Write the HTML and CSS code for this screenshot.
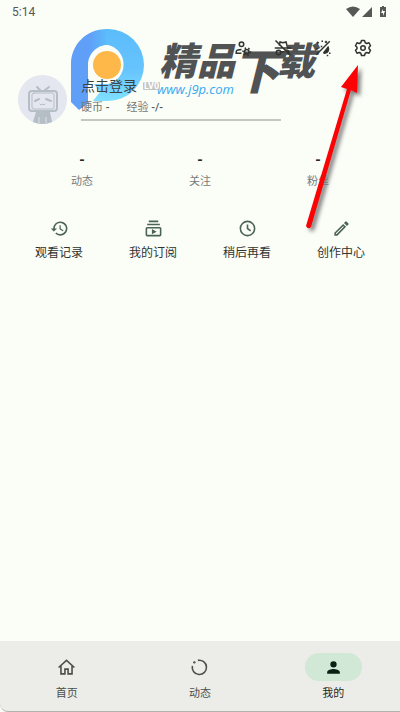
FILE: index.html
```html
<!DOCTYPE html>
<html lang="zh-CN">
<head>
    <meta charset="UTF-8">
    <meta name="viewport" content="width=device-width, initial-scale=1.0">
    <title>我的</title>
    <link rel="stylesheet" href="styles.css">
</head>
<body>
    <div class="watermark">
        <svg class="watermark-logo" viewBox="0 0 74 82">
            <defs>
                <linearGradient id="ring" x1="0" y1="0" x2="0" y2="1">
                    <stop offset="0" stop-color="#5bbcfb"/>
                    <stop offset="0.55" stop-color="#66c3fd"/>
                    <stop offset="1" stop-color="#7fe0ff"/>
                </linearGradient>
                <linearGradient id="stem" x1="0" y1="0" x2="1" y2="0">
                    <stop offset="0" stop-color="#609ff8"/>
                    <stop offset="0.5" stop-color="#609ff8"/>
                    <stop offset="1" stop-color="#5bbcfb"/>
                </linearGradient>
            </defs>
            <path fill="url(#stem)" d="M0 35C0 16 15 0 36 0V16C26 16 17 25 17 36V74L8 81L0 73Z"/>
            <path fill="url(#ring)" d="M35 0H37A36 36 0 0 1 37 72H22L29 63L23 55H37A20 20 0 0 0 37 16H35Z"/>
            <circle cx="36" cy="36" r="14" fill="#fdb849"/>
        </svg>
        <div class="watermark-name">精品<span class="low">下</span>载</div>
        <div class="watermark-site">www.j9p.com</div>
    </div>

    <header class="status-bar">
        <span>5:14</span>
        <svg class="status-icons" viewBox="0 0 42 14">
            <path fill="#555855" d="M0 4Q7-1 14 4L7 12ZM26 2V12H16ZM34 2H36V1H38V2H40V12H34Z"/>
            <path fill="#fbfdf7" d="M37 4L35 8H37V11L39 6H37Z"/>
        </svg>
    </header>

    <div class="toolbar">
        <button type="button" aria-label="账号设置">
            <svg viewBox="0 0 24 24"><g fill="none" stroke="currentColor" stroke-width="2"><circle cx="10" cy="7" r="3"/><path d="M10 19H3V17C3 15 6 14 10 14"/><circle cx="17" cy="17" r="3"/><circle cx="17" cy="17" r="5" stroke-dasharray="2 3"/></g></svg>
        </button>
        <button type="button" aria-label="无痕模式">
            <svg viewBox="0 0 24 24"><g fill="none" stroke="currentColor" stroke-width="2"><path d="M2 2L22 22M1 12H23M7 9L8 4L12 5L16 4L18 11"/><circle cx="6" cy="18" r="3"/><path d="M9 17H14"/><path d="M15 15C20 14 21 18 19 20"/></g></svg>
        </button>
        <button type="button" aria-label="主题">
            <svg viewBox="0 0 24 24"><path fill="none" stroke="currentColor" stroke-width="2" d="M3 21L21 3"/><path fill="currentColor" d="M3 5L5 3L7 5L5 7ZM10 2H12V4H10ZM14 4L16 2L18 4L16 6ZM3 12H5V14H3ZM9 9H11V11H9ZM19 9C22 14 20 20 13 20L12 18Z"/><path fill="currentColor" d="M20 18H22V20H20ZM17 21H19V23H17Z"/></svg>
        </button>
        <button type="button" aria-label="设置">
            <svg viewBox="0 0 24 24"><g fill="none" stroke="currentColor" stroke-width="2" stroke-linejoin="round"><path d="M10 2H14L15 5L17 6L20 5L22 9L20 11V13L22 15L20 19L17 18L15 19L14 22H10L9 19L7 18L4 19L2 15L4 13V11L2 9L4 5L7 6L9 5Z"/><circle cx="12" cy="12" r="3"/></g></svg>
        </button>
    </div>

    <main>
        <section class="profile">
            <svg class="avatar" viewBox="0 0 49 49">
                <circle cx="24.500" cy="24.500" r="24.500" fill="#e4e6f0"/>
                <g fill="none" stroke="#b5bdc5" stroke-width="2" stroke-linecap="round">
                    <path d="M19 12L22 15M31 12L27 15"/>
                    <rect x="11" y="16" width="28" height="20" rx="3"/>
                    <rect x="14" y="18" width="22" height="16" rx="2" stroke-width="1"/>
                    <path d="M17 26L21 24M33 26L28 24"/>
                    <path stroke-width="1" d="M22 29L23 30L25 29L26 30L27 29"/>
                </g>
                <path fill="#b5bdc5" d="M18 37H32L34 47Q25 51 15 47Z"/>
                <path stroke="#dfe2e9" d="M21 42V48M28 42V48"/>
            </svg>
            <div class="profile-info">
                <div class="profile-name"><a href="#login">点击登录</a><span class="level">LV0</span></div>
                <div class="profile-coins"><span>硬币 <b>-</b></span><span>经验 <b>-/-</b></span></div>
                <div class="level-bar"></div>
            </div>
        </section>

        <section class="stats">
            <a href="#dynamics"><b>-</b><span>动态</span></a>
            <a href="#following"><b>-</b><span>关注</span></a>
            <a href="#fans"><b>-</b><span>粉丝</span></a>
        </section>

        <section class="actions">
            <a href="#history">
                <svg viewBox="0 0 24 24"><path fill="currentColor" d="M13 3a9 9 0 0 0-9 9H1l3.900 3.900L9 12H6a7 7 0 1 1 2.060 4.940l-1.420 1.420A9 9 0 1 0 13 3zm-1 5v5l4.250 2.520.77-1.280-3.520-2.090V8z"/></svg>
                <span>观看记录</span>
            </a>
            <a href="#subscriptions">
                <svg viewBox="0 0 24 24"><path fill="currentColor" d="M4 6h16v2H4zM6 2h12v2H6zM20 10H4a2 2 0 0 0-2 2v8a2 2 0 0 0 2 2h16a2 2 0 0 0 2-2v-8a2 2 0 0 0-2-2zm0 10H4v-8h16zM10 12.700v6.600L16 16z"/></svg>
                <span>我的订阅</span>
            </a>
            <a href="#later">
                <svg viewBox="0 0 24 24"><g fill="none" stroke="currentColor" stroke-width="2"><circle cx="12" cy="12" r="9"/><path d="M12 7V12L16 15"/></g></svg>
                <span>稍后再看</span>
            </a>
            <a href="#creator">
                <svg viewBox="0 0 24 24"><path fill="currentColor" d="M14.060 9.020l.92.920L5.920 19H5v-.920zM17.660 3c-.250 0-.510.100-.700.290l-1.830 1.830 3.750 3.750 1.830-1.830a1 1 0 0 0 0-1.410l-2.340-2.340c-.200-.200-.450-.290-.710-.290zM14.060 6.190L3 17.250V21h3.750L17.810 9.940z"/></svg>
                <span>创作中心</span>
            </a>
        </section>
    </main>

    <nav class="bottom-nav">
        <a href="#home">
            <span class="pill"><svg viewBox="0 0 24 24"><path fill="none" stroke="currentColor" stroke-width="2" d="M2 12L12 3L22 12M5 10V20H10V14H14V20H19V10"/></svg></span>
            首页
        </a>
        <a href="#dynamics">
            <span class="pill"><svg viewBox="0 0 24 24"><path fill="none" stroke="currentColor" stroke-width="2" d="M10 3A9 9 0 1 1 3 10"/><circle cx="5.500" cy="5.500" r="1.500" fill="currentColor"/></svg></span>
            动态
        </a>
        <a href="#mine" class="active">
            <span class="pill"><svg viewBox="0 0 24 24"><path fill="currentColor" d="M12 12a4 4 0 1 0 0-8 4 4 0 0 0 0 8zm0 2c-2.670 0-8 1.340-8 4v2h16v-2c0-2.660-5.330-4-8-4z"/></svg></span>
            我的
        </a>
    </nav>

    <svg class="arrow" viewBox="0 0 64 170">
        <path fill="#fb0205" d="M55 3L54 31L48 28L8 165Q5 168 3 164L44 27L38 25Z"/>
    </svg>
</body>
</html>
```
FILE: styles.css
```css
* {
    box-sizing: border-box;
}

body {
    position: relative;
    display: flex;
    flex-direction: column;
    min-height: 100vh;
    margin: 0;
    background-color: #fbfdf7;
    color: #303330;
    font-family: Roboto, "Noto Sans CJK SC", sans-serif;
    font-size: 12px;
    line-height: 16px;
}

a {
    color: inherit;
    text-decoration: none;
}

svg {
    display: block;
}

.status-bar,
.toolbar,
main {
    position: relative;
}

.status-bar {
    display: flex;
    justify-content: space-between;
    align-items: center;
    height: 24px;
    padding: 0 12px;
    color: #555855;
}

.status-icons {
    width: 42px;
    height: 14px;
}

.toolbar {
    display: flex;
    justify-content: flex-end;
    height: 48px;
    padding-right: 17px;
}

.toolbar button {
    display: flex;
    align-items: center;
    justify-content: center;
    width: 40px;
    padding: 0;
    border: none;
    background: none;
    color: #303330;
}

.toolbar svg {
    width: 18px;
    height: 18px;
}

main {
    flex: 1;
}

/* Profile */
.profile {
    display: flex;
    gap: 14px;
    padding: 3px 18px 0;
}

.avatar {
    flex: none;
    width: 49px;
    height: 49px;
}

.profile-info {
    width: 55%;
}

.profile-name {
    display: flex;
    align-items: center;
    gap: 6px;
    height: 22px;
    color: #3c4240;
    font-size: 14px;
}

.level {
    padding: 0 1px;
    border-radius: 1px;
    background-color: #c4c6c4;
    color: #fff;
    font-size: 9px;
    font-weight: bold;
    line-height: 8px;
}

.profile-coins {
    display: flex;
    gap: 17px;
    height: 22px;
    color: #737673;
    font-size: 11px;
    line-height: 22px;
}

.profile-coins b {
    color: #555855;
    font-weight: 500;
}

.level-bar {
    height: 2px;
    background-color: #c3c6c1;
}

/* Counters */
.stats {
    display: grid;
    grid-template-columns: repeat(3, 1fr);
    padding: 28px 23px 0;
    text-align: center;
}

.stats a {
    display: flex;
    flex-direction: column;
    gap: 6px;
    color: #777a77;
    font-size: 11px;
}

.stats b {
    color: #222522;
    font-size: 14px;
}

/* Shortcuts */
.actions {
    display: grid;
    grid-template-columns: repeat(4, 1fr);
    padding: 29px 12px 0;
}

.actions a {
    display: flex;
    flex-direction: column;
    align-items: center;
    gap: 7px;
}

.actions svg {
    width: 19px;
    height: 19px;
    color: #4b6354;
}

/* Bottom navigation */
.bottom-nav {
    display: flex;
    height: 71px;
    padding-top: 12px;
    border-bottom: 1px solid #b0b2ae;
    border-bottom-left-radius: 8px;
    background-color: #ecede8;
}

.bottom-nav a {
    display: flex;
    flex: 1;
    flex-direction: column;
    align-items: center;
    gap: 5px;
    color: #4b4e4b;
    font-size: 11px;
}

.bottom-nav .active {
    color: #202820;
}

.pill {
    display: flex;
    align-items: center;
    justify-content: center;
    width: 57px;
    height: 28px;
    border-radius: 14px;
}

.active .pill {
    background-color: #d0e8d5;
    color: #0a2014;
}

.pill svg {
    width: 19px;
    height: 19px;
}

/* Watermark lies under the page content */
.watermark {
    position: absolute;
    top: 29px;
    left: 71px;
}

.watermark-logo {
    width: 74px;
    height: 82px;
}

.watermark-name {
    position: absolute;
    top: 7px;
    left: 88px;
    display: flex;
    color: #505254;
    font-family: "Noto Sans CJK SC", sans-serif;
    font-size: 38px;
    font-style: italic;
    font-weight: 900;
    line-height: 46px;
    white-space: nowrap;
}

.watermark-name .low {
    margin: 2px -3px 0;
    font-size: 48px;
    line-height: 60px;
}

.watermark-site {
    position: absolute;
    top: 52px;
    left: 86px;
    color: #35aaf0;
    font-family: "Open Sans", sans-serif;
    font-size: 13px;
    font-style: italic;
}

.arrow {
    position: absolute;
    top: 62px;
    right: 33px;
    width: 64px;
    height: 170px;
    filter: drop-shadow(3px 3px 2px #777);
    pointer-events: none;
}
```
